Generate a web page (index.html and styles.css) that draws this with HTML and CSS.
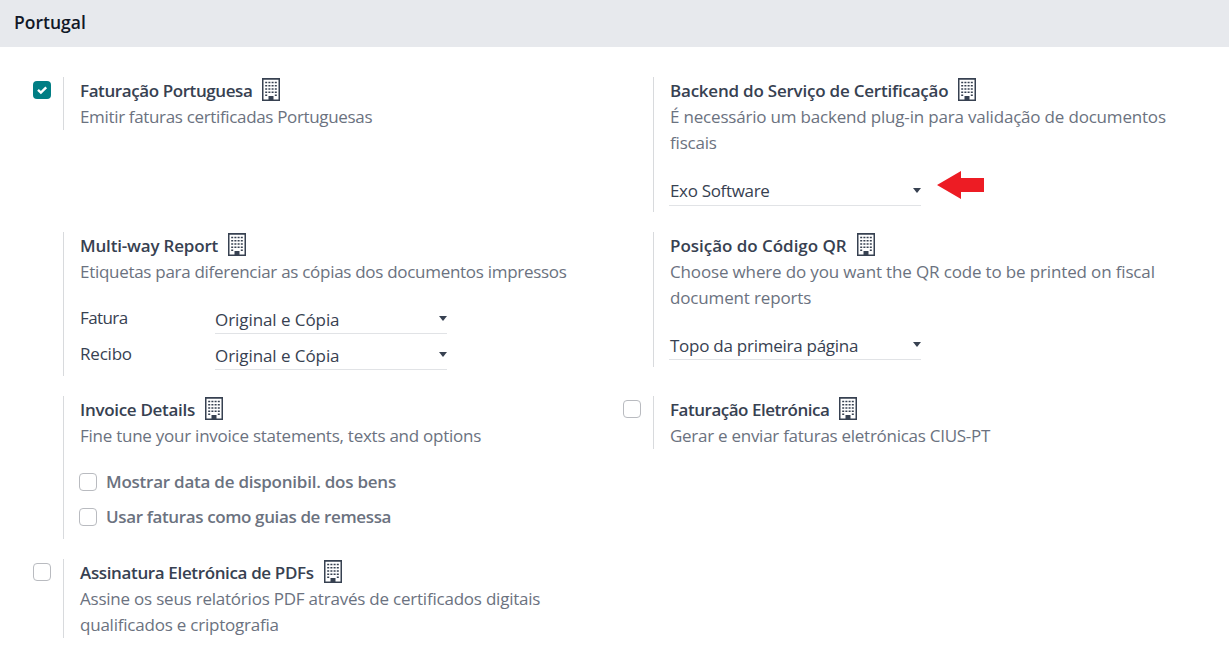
FILE: index.html
```html
<!DOCTYPE html>
<html lang="pt">
<head>
<meta charset="utf-8">
<title>Portugal</title>
<link rel="stylesheet" href="styles.css">
</head>
<body>
<svg class="defs" width="0" height="0">
  <symbol id="building" viewBox="0 0 18 23">
    <path fill-rule="evenodd" d="M0 0h18v23H0zM1.500 1.800v19.700H6.500v-3.500h5v3.500h5V1.800z"/>
    <path d="M3.200 4.500h12M3.200 7.700h12M3.200 11h12M3.200 14.200h12" fill="none" stroke="currentColor" stroke-width="1.500" stroke-dasharray="2 1.200"/>
    <path d="M3.200 16.600h2v1.500h-2zM12.800 16.600h2v1.500h-2z"/>
  </symbol>
</svg>
<h2 class="section-title">Portugal</h2>
<main class="settings">
  <section class="setting">
    <div class="toggle"><span class="check checked"><svg viewBox="0 0 18 18"><path d="M5 8.900l2.900 2.700 5.300-5.200"/></svg></span></div>
    <div class="body">
      <h3><span class="t-fp">Faturação Portuguesa</span><svg class="icon"><use href="#building"/></svg></h3>
      <p><span class="d-fp">Emitir faturas certificadas Portuguesas</span></p>
    </div>
  </section>
  <section class="setting">
    <div class="toggle"></div>
    <div class="body tall">
      <h3><span class="t-be">Backend do Serviço de Certificação</span><svg class="icon"><use href="#building"/></svg></h3>
      <p><span class="d-be">É necessário um backend plug-in para validação de documentos<br>fiscais</span></p>
      <div class="pick"><div class="select wide"><span class="v-exo">Exo Software</span><i class="caret"></i></div>
      <svg class="arrow" viewBox="0 0 47 28"><path d="M0 14L24 0v7h23v14H24v7z"/></svg></div>
    </div>
  </section>
  <section class="setting">
    <div class="toggle"></div>
    <div class="body report">
      <h3><span class="t-mr">Multi-way Report</span><svg class="icon"><use href="#building"/></svg></h3>
      <p><span class="d-mr">Etiquetas para diferenciar as cópias dos documentos impressos</span></p>
      <div class="fields">
        <label class="l-fa">Fatura</label><div class="select"><span class="v-oc">Original e Cópia</span><i class="caret"></i></div>
        <label class="l-re">Recibo</label><div class="select"><span class="v-oc">Original e Cópia</span><i class="caret"></i></div>
      </div>
    </div>
  </section>
  <section class="setting">
    <div class="toggle"></div>
    <div class="body tall">
      <h3><span class="t-qr">Posição do Código QR</span><svg class="icon"><use href="#building"/></svg></h3>
      <p><span class="d-qr">Choose where do you want the QR code to be printed on fiscal<br>document reports</span></p>
      <div class="pick upper"><div class="select wide"><span class="v-topo">Topo da primeira página</span><i class="caret"></i></div></div>
    </div>
  </section>
  <section class="setting">
    <div class="toggle"></div>
    <div class="body details">
      <h3><span class="t-id">Invoice Details</span><svg class="icon"><use href="#building"/></svg></h3>
      <p><span class="d-id">Fine tune your invoice statements, texts and options</span></p>
      <div class="options">
        <label><span class="check"></span><span class="o-mo">Mostrar data de disponibil. dos bens</span></label>
        <label><span class="check"></span><span class="o-us">Usar faturas como guias de remessa</span></label>
      </div>
    </div>
  </section>
  <section class="setting">
    <div class="toggle"><span class="check"></span></div>
    <div class="body">
      <h3><span class="t-fe">Faturação Eletrónica</span><svg class="icon"><use href="#building"/></svg></h3>
      <p><span class="d-fe">Gerar e enviar faturas eletrónicas CIUS-PT</span></p>
    </div>
  </section>
  <section class="setting">
    <div class="toggle"><span class="check"></span></div>
    <div class="body pdf">
      <h3><span class="t-as">Assinatura Eletrónica de PDFs</span><svg class="icon"><use href="#building"/></svg></h3>
      <p><span class="d-as">Assine os seus relatórios PDF através de certificados digitais<br>qualificados e criptografia</span></p>
    </div>
  </section>
</main>
</body>
</html>
```
FILE: styles.css
```css
* { box-sizing: border-box; }
body {
  margin: 0;
  background: #fff;
  color: #374151;
  font: 400 17px/26.25px "Open Sans", "Noto Sans", sans-serif;
  overflow: hidden;
}
.defs { display: block; }
.section-title {
  margin: 0;
  height: 47px;
  padding: 0 14px;
  background: #e7e9ed;
  color: #111827;
  font-size: 17.5px;
  font-weight: 600;
  line-height: 44px;
}
.settings {
  display: grid;
  grid-template-columns: 590px 590px;
  grid-template-rows: 155px 164px 163px 81px;
  padding: 30px 0 0 33px;
}
.setting { display: flex; align-items: flex-start; }
.toggle { width: 30px; padding-top: 4px; flex: none; }
.check {
  display: block;
  flex: none;
  width: 18px;
  height: 18px;
  border: 1px solid #b9bbc0;
  border-radius: 4px;
  background: #fff;
}
.checked { background: #017e84; border: 0; }
.check svg { display: block; fill: none; stroke: #fff; stroke-width: 2.4; }
.body { height: 53px; border-left: 1px solid #d8dadd; padding-left: 16px; white-space: nowrap; }
.tall { height: 135px; }
.report { height: 144px; }
.details { height: 143px; }
.pdf { height: 79px; }
h3 { display: flex; align-items: center; gap: 10px; margin: 0; height: 27px; font-size: 17px; font-weight: 600; }
h3 span { padding-top: 1px; }
.icon { width: 18px; height: 23px; margin-top: -2px; fill: #374151; color: #374151; }
p { margin: 0; color: #6b7280; }
.pick { display: flex; margin-top: 21px; }
.upper { margin-top: 20px; }
.select {
  display: flex;
  justify-content: space-between;
  width: 232px;
  height: 28px;
  margin-left: -1px;
  padding-left: 1px;
  border-bottom: 1px solid #e1e3e6;
}
.wide { width: 252px; }
.caret { border: 4.5px solid transparent; border-top: 5px solid #374151; border-bottom: 0; margin-top: 10px; height: 5px; }
.arrow { width: 47px; height: 28px; fill: #ed1c24; margin: -7px 0 0 16px; }
.fields { display: grid; grid-template-columns: 136px 233px; grid-auto-rows: 36px; margin-top: 20px; }
.fields .select { margin-top: 1px; }
.fields .select span { padding-top: 1px; margin-left: -1px; }
.upper .select span { padding-top: 1px; }
.options { margin-top: 15px; color: #6b7280; font-weight: 600; }
.options label { display: flex; align-items: center; gap: 9px; height: 35px; margin-left: -1px; }
.options label span + span { padding-top: 1px; }

/* optical tracking */
.t-fp { letter-spacing: -.41px; }
.t-be { letter-spacing: -.22px; }
.t-mr { letter-spacing: -.18px; }
.t-qr { letter-spacing: -.03px; }
.t-id { letter-spacing: -.3px; }
.t-fe { letter-spacing: -.48px; }
.t-as { letter-spacing: -.36px; }
.d-fp { letter-spacing: -.34px; }
.d-be { letter-spacing: -.19px; }
.d-mr { letter-spacing: -.29px; }
.d-qr { letter-spacing: -.15px; }
.d-id { letter-spacing: -.25px; }
.d-fe { letter-spacing: -.27px; }
.d-as { letter-spacing: -.22px; }
.v-exo { letter-spacing: -.33px; }
.v-oc { letter-spacing: -.07px; }
.v-topo { letter-spacing: -.26px; }
.l-fa { letter-spacing: -.6px; }
.l-re { letter-spacing: -.2px; }
.o-mo { letter-spacing: -.24px; }
.o-us { letter-spacing: -.37px; }
```
